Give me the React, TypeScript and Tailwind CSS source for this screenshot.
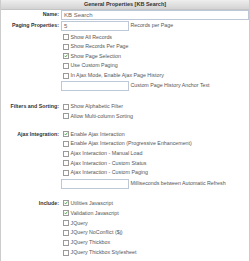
type Opt = { label: string; checked?: boolean };

function Check({ checked }: { checked?: boolean }) {
  return (
    <span className="ml-[2px] mr-[1.5px] w-[6px] h-[6px] shrink-0 border border-[#9a9a9a] bg-white flex items-center justify-center">
      {checked && (
        <svg viewBox="0 0 10 10" className="w-[6px] h-[6px]" fill="none" stroke="#3a9f34" strokeWidth="2.2"
             strokeLinecap="round" strokeLinejoin="round">
          <path d="M2 5.2l2 2.2 4-5" />
        </svg>
      )}
    </span>
  );
}

function CheckRow({ opt, h = "h-[9.6px]" }: { opt: Opt; h?: string }) {
  return (
    <div className={`flex items-center ${h}`}>
      <Check checked={opt.checked} />
      <span className="text-[#555] whitespace-nowrap">{opt.label}</span>
    </div>
  );
}

function TextBox({ value, wide, note }: { value?: string; wide?: boolean; note?: string }) {
  return (
    <div className="flex items-center h-[10px]">
      <div
        className={`${wide ? "flex-1" : "w-[68px]"} h-[10px] border border-[#bcc7d7] bg-white flex items-center px-[2px] text-[6px] text-[#666]`}
      >
        {value}
      </div>
      {note && <span className="ml-[1.5px] text-[#555] whitespace-nowrap">{note}</span>}
    </div>
  );
}

function Label({ children, h = "h-[9.6px]" }: { children: string; h?: string }) {
  return (
    <div className={`${h} flex items-center justify-end pr-[2px] font-bold text-[#333] whitespace-nowrap`}>
      {children}
    </div>
  );
}

const PAGING: Opt[] = [
  { label: "Show All Records" },
  { label: "Show Records Per Page" },
  { label: "Show Page Selection", checked: true },
  { label: "Use Custom Paging" },
  { label: "In Ajax Mode, Enable Ajax Page History" },
];

const FILTERS: Opt[] = [{ label: "Show Alphabetic Filter" }, { label: "Allow Multi-column Sorting" }];

const AJAX: Opt[] = [
  { label: "Enable Ajax Interaction", checked: true },
  { label: "Enable Ajax Interaction (Progressive Enhancement)" },
  { label: "Ajax Interaction - Manual Load" },
  { label: "Ajax Interaction - Custom Status" },
  { label: "Ajax Interaction - Custom Paging" },
];

const INCLUDE: Opt[] = [
  { label: "Utilities Javascript", checked: true },
  { label: "Validation Javascript", checked: true },
  { label: "JQuery" },
  { label: "JQuery NoConflict ($j)" },
  { label: "JQuery Thickbox" },
  { label: "JQuery Thickbox Stylesheet" },
];

export default function App() {
  return (
    <div className="w-[250px] h-[261px] overflow-hidden bg-white border-x border-[#cccccc] font-['Liberation_Sans',Arial,sans-serif] text-[5.3px] leading-none">
      {/* Header */}
      <div className="h-[10px] flex items-center justify-center bg-gradient-to-b from-[#eeeeee] to-[#d3d3d3] border-b border-[#c4c4c4] font-bold text-[#333] text-[5.5px]">
        General Properties [KB Search]
      </div>

      <div className="grid grid-cols-[60px_1fr]">
        {/* Name */}
        <Label h="h-[10px]">Name:</Label>
        <TextBox value="KB Search" wide />

        {/* Paging */}
        <div className="mt-[1px]">
          <Label h="h-[10px]">Paging Properties:</Label>
        </div>
        <div className="mt-[1px] flex flex-col">
          <TextBox value="5" note="Records per Page" />
          <div className="mt-[1.5px]">
            {PAGING.map((o) => (
              <CheckRow key={o.label} opt={o} />
            ))}
          </div>
          <div className="mt-[0.5px]">
            <TextBox note="Custom Page History Anchor Text" />
          </div>
        </div>

        {/* Filters */}
        <div className="mt-[11px]">
          <Label>Filters and Sorting:</Label>
        </div>
        <div className="mt-[11px]">
          {FILTERS.map((o) => (
            <CheckRow key={o.label} opt={o} />
          ))}
        </div>

        {/* Ajax */}
        <div className="mt-[8.5px]">
          <Label>Ajax Integration:</Label>
        </div>
        <div className="mt-[8.5px] flex flex-col">
          {AJAX.map((o) => (
            <CheckRow key={o.label} opt={o} />
          ))}
          <div className="mt-[1px]">
            <TextBox note="Milliseconds between Automatic Refresh" />
          </div>
        </div>

        {/* Include */}
        <div className="mt-[9.8px]">
          <Label h="h-[9.9px]">Include:</Label>
        </div>
        <div className="mt-[9.8px]">
          {INCLUDE.map((o) => (
            <CheckRow key={o.label} opt={o} h="h-[9.9px]" />
          ))}
        </div>
      </div>
    </div>
  );
}
